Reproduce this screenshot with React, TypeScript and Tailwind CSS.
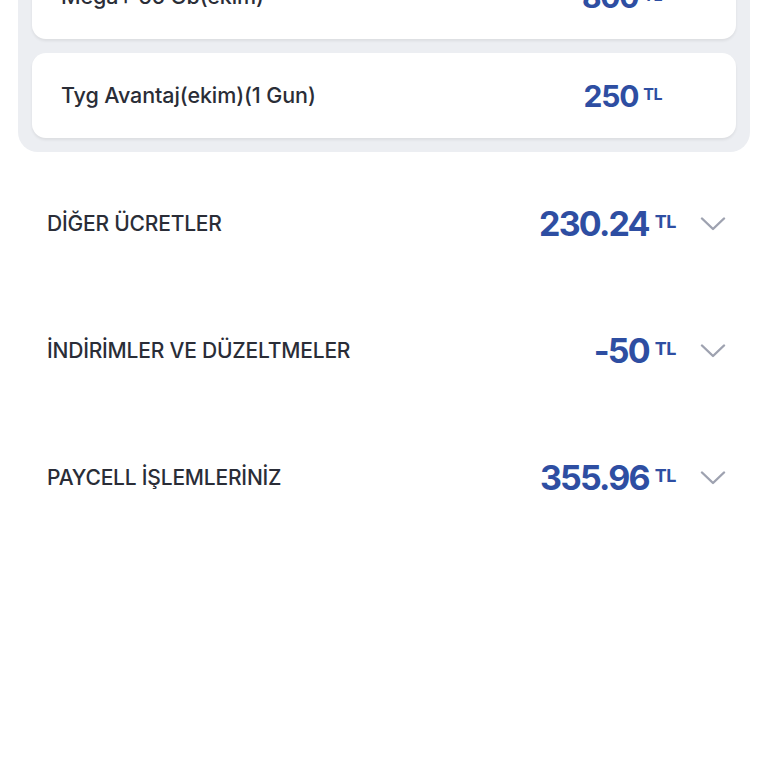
import React from "react";

const font = { fontFamily: "Inter, 'Noto Sans', sans-serif" };

function Chevron() {
  return (
    <svg width="26" height="14" viewBox="0 0 26 14" fill="none" className="shrink-0">
      <path d="M2 1.5 L13 12 L24 1.5" stroke="#9ea2b0" strokeWidth="2.4" strokeLinecap="round" strokeLinejoin="round" />
    </svg>
  );
}

function Card({ label, value }: { label: string; value: string }) {
  return (
    <div className="flex h-[85px] items-center rounded-[14px] bg-white pl-[29px] pr-[74px] shadow-[0_2px_3px_rgba(0,0,0,0.07)]">
      <span className="flex-1 text-[21.5px] font-medium tracking-[-0.1px] text-[#2a2d37]">{label}</span>
      <span className="flex items-center gap-[5px] text-[#2e4ea2]">
        <span className="text-[30px] font-bold leading-none tracking-[-1.2px]">{value}</span>
        <span className="mb-[4px] text-[16px] font-bold leading-none tracking-[-0.5px]">TL</span>
      </span>
    </div>
  );
}

function Row({ label, value }: { label: string; value: string }) {
  return (
    <div className="flex h-[127px] items-center pl-[47px] pr-[42px]">
      <span className="flex-1 text-[21px] font-medium tracking-[-0.2px] text-[#2a2d37]">{label}</span>
      <span className="flex items-center gap-[6px] text-[#2e4ea2]">
        <span className="text-[34px] font-bold leading-none tracking-[-1.8px]">{value}</span>
        <span className="mb-[4px] text-[18px] font-bold leading-none tracking-[-0.5px]">TL</span>
      </span>
      <span className="ml-[24px] flex items-center">
        <Chevron />
      </span>
    </div>
  );
}

export default function App() {
  return (
    <div className="h-[768px] w-[768px] overflow-hidden bg-white" style={font}>
      <div className="mx-[18px] -mt-[60px] flex flex-col gap-[14px] rounded-b-[20px] bg-[#eceef2] px-[14px] pb-[14px] pt-[14px]">
        <Card label="Mega+ 65 Gb(ekim)" value="800" />
        <Card label="Tyg Avantaj(ekim)(1 Gun)" value="250" />
      </div>
      <div className="mt-[8px] flex flex-col">
        <Row label="DİĞER ÜCRETLER" value="230.24" />
        <Row label="İNDİRİMLER VE DÜZELTMELER" value="-50" />
        <Row label="PAYCELL İŞLEMLERİNİZ" value="355.96" />
      </div>
    </div>
  );
}
